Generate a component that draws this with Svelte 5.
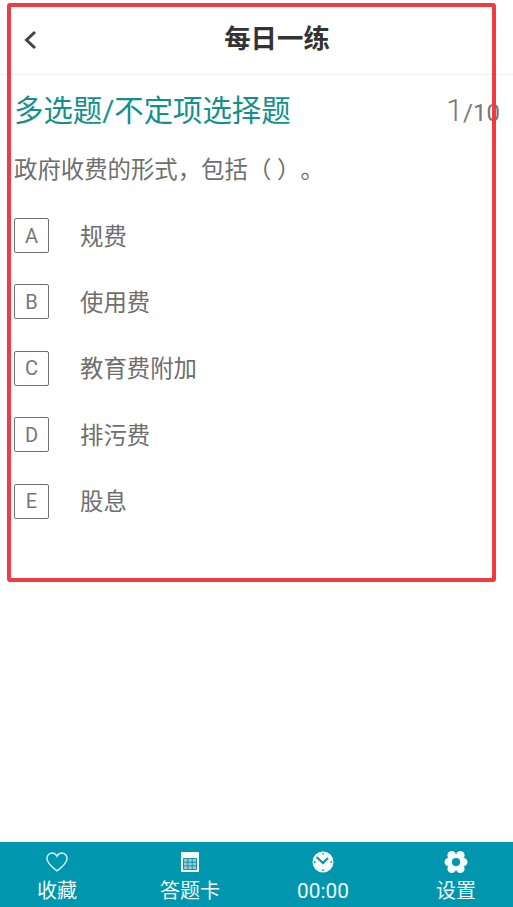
<script>
  const options = [
    { key: 'A', text: '规费' },
    { key: 'B', text: '使用费' },
    { key: 'C', text: '教育费附加' },
    { key: 'D', text: '排污费' },
    { key: 'E', text: '股息' }
  ];
</script>

<div class="page">
  <header class="topbar">
    <svg class="back" width="14" height="20" viewBox="0 0 14 20">
      <path d="M12 2 L3.500 10 L12 18" fill="none" stroke="#444" stroke-width="3" />
    </svg>
    <h1>每日一练</h1>
  </header>

  <main class="content">
    <div class="type-row">
      <span class="type">多选题/不定项选择题</span>
      <span class="count"><b>1</b>/10</span>
    </div>
    <p class="question">政府收费的形式，包括（ ）。</p>
    <ul class="options">
      {#each options as opt}
        <li>
          <span class="key">{opt.key}</span>
          <span class="label">{opt.text}</span>
        </li>
      {/each}
    </ul>
  </main>

  <nav class="tabbar">
    <div class="tab">
      <svg width="22" height="20" viewBox="0 0 22 20">
        <path d="M11 18.800 C5 14.500 1 11 1 6.500 C1 3.400 3.400 1 6.200 1 C8.200 1 10 2.200 11 4.200 C12 2.200 13.800 1 15.800 1 C18.600 1 21 3.400 21 6.500 C21 11 17 14.500 11 18.800 Z" fill="none" stroke="#d5eff3" stroke-width="1.500" />
      </svg>
      <span>收藏</span>
    </div>
    <div class="tab">
      <svg width="18" height="20" viewBox="0 0 18 20">
        <rect width="18" height="20" rx="1" fill="#f2fafb" />
        <rect x="2" y="6" width="14" height="12" fill="#8fd0db" />
        <path d="M2.500 6.500 H15.500 V17.500 H2.500 Z M2.500 10.200 H15.500 M2.500 13.900 H15.500 M6.800 6.500 V17.500 M11.200 6.500 V17.500" fill="none" stroke="#1f8fa3" stroke-width="1" />
      </svg>
      <span>答题卡</span>
    </div>
    <div class="tab">
      <svg width="22" height="22" viewBox="0 0 22 22">
        <circle cx="11" cy="11" r="10.500" fill="#f7fcfd" />
        <path d="M4.500 6 L11 12 L16 7" fill="none" stroke="#0097ae" stroke-width="2" />
        <circle cx="11" cy="2.800" r="0.900" fill="#0097ae" />
        <circle cx="2.800" cy="11" r="0.900" fill="#0097ae" />
        <circle cx="19.200" cy="11" r="0.900" fill="#0097ae" />
        <circle cx="11" cy="19.200" r="0.900" fill="#0097ae" />
      </svg>
      <span class="time">00:00</span>
    </div>
    <div class="tab">
      <svg width="24" height="23" viewBox="0 0 24 23">
        <g fill="#f7fcfd">
          <circle cx="7.500" cy="4.500" r="4.500" />
          <circle cx="16.500" cy="4.500" r="4.500" />
          <circle cx="4.500" cy="11.500" r="4.500" />
          <circle cx="19.500" cy="11.500" r="4.500" />
          <circle cx="7.500" cy="18.500" r="4.500" />
          <circle cx="16.500" cy="18.500" r="4.500" />
          <circle cx="12" cy="11.500" r="8" />
        </g>
        <circle cx="12" cy="11.500" r="4.300" fill="#0097ae" />
      </svg>
      <span>设置</span>
    </div>
  </nav>

  <div class="highlight"></div>
</div>

<style>
  :global(body) {
    margin: 0;
    background: #fff;
  }

  .page {
    position: relative;
    display: flex;
    flex-direction: column;
    width: 513px;
    height: 907px;
    overflow: hidden;
    font-family: "Roboto", "Noto Sans CJK SC", sans-serif;
    text-spacing-trim: space-all;
  }

  .topbar {
    position: relative;
    display: flex;
    align-items: center;
    justify-content: center;
    height: 74px;
    flex: none;
    border-bottom: 1px solid #eee;
    box-sizing: content-box;
  }

  .back {
    position: absolute;
    left: 23px;
    top: 30px;
  }

  h1 {
    margin: 4px 0 0;
    padding-left: 41px;
    font-size: 26.400px;
    font-weight: 700;
    line-height: 1;
    color: #333;
  }

  .content {
    flex: 1;
    padding: 0 0 0 14px;
  }

  .type-row {
    display: flex;
    justify-content: space-between;
    align-items: flex-end;
    width: 486px;
    height: 56px;
    white-space: nowrap;
  }

  .type {
    font-size: 29.400px;
    line-height: 40px;
    color: #14908c;
  }

  .count {
    font-size: 24px;
    line-height: 36px;
    color: #777;
  }

  .count b {
    font-size: 31px;
    font-weight: 300;
  }

  .question {
    margin: 23px 0 0;
    font-size: 23.400px;
    line-height: 32px;
    color: #6e6e6e;
  }

  .options {
    list-style: none;
    margin: 32px 0 0;
    padding: 0;
  }

  .options li {
    display: flex;
    align-items: center;
    height: 35px;
    margin-bottom: 31.400px;
  }

  .key {
    display: flex;
    align-items: center;
    justify-content: center;
    width: 35px;
    height: 35px;
    box-sizing: border-box;
    border: 1.500px solid #707070;
    border-radius: 2px;
    font-size: 20px;
    color: #777;
  }

  .label {
    margin-left: 31px;
    margin-top: -2px;
    font-size: 23.400px;
    color: #6e6e6e;
  }

  .tabbar {
    display: grid;
    grid-template-columns: repeat(4, 133px);
    justify-content: center;
    height: 65px;
    flex: none;
    background: #0097ae;
    color: #f0fafb;
  }

  .tab {
    display: flex;
    flex-direction: column;
    align-items: center;
    padding-top: 9px;
    box-sizing: border-box;
  }

  .tab svg {
    flex: none;
    height: 22px;
  }

  .tab span {
    margin-top: 4px;
    font-size: 20px;
    line-height: 28px;
  }

  .tab .time {
    font-size: 20.800px;
  }

  .highlight {
    position: absolute;
    left: 7px;
    top: 3px;
    width: 489px;
    height: 579px;
    box-sizing: border-box;
    border: 4px solid #ee3c42;
    border-radius: 3px;
    pointer-events: none;
  }
</style>
